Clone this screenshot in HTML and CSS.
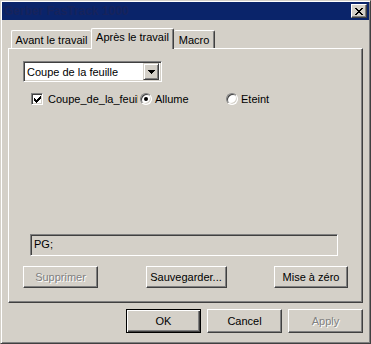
FILE: index.html
```html
<!DOCTYPE html>
<html lang="fr">
<head>
  <meta charset="UTF-8" />
  <title>Gerber FasTrack 1000</title>
  <link rel="stylesheet" href="styles.css">
</head>
<body>
  <div class="window">
    <div class="titlebar">
      <span class="title">Gerber FasTrack 1000</span>
      <button class="close" title="Fermer">
        <svg width="8" height="7" viewBox="0 0 8 7" shape-rendering="crispEdges">
          <path d="M0 0h2v1h-2zM6 0h2v1h-2zM1 1h2v1h-2zM5 1h2v1h-2zM2 2h4v1h-4zM3 3h2v1h-2zM2 4h4v1h-4zM1 5h2v1h-2zM5 5h2v1h-2zM0 6h2v1h-2zM6 6h2v1h-2z" fill="#000"/>
        </svg>
      </button>
    </div>
    <div class="content">
      <div class="tabs">
        <div class="tab tab-avant">Avant le travail</div>
        <div class="tab tab-apres active">Après le travail</div>
        <div class="tab tab-macro">Macro</div>
      </div>
      <div class="panel">
        <div class="combo">
          <span class="combo-text">Coupe de la feuille</span>
          <span class="combo-btn">
            <svg width="7" height="4" viewBox="0 0 7 4" shape-rendering="crispEdges">
              <path d="M0 0h7v1h-7zM1 1h5v1h-5zM2 2h3v1h-3zM3 3h1v1h-1z" fill="#000"/>
            </svg>
          </span>
        </div>
        <div class="options">
          <label class="check">
            <span class="box">
              <svg width="7" height="7" viewBox="0 0 7 7" shape-rendering="crispEdges">
                <path d="M6 0h1v3h-1zM5 1h1v3h-1zM4 2h1v3h-1zM3 3h1v3h-1zM2 4h1v3h-1zM1 3h1v3h-1zM0 2h1v3h-1z" fill="#000"/>
              </svg>
            </span>
            <span class="check-label">Coupe_de_la_feuille</span>
          </label>
          <label class="radio radio-allume"><span class="dot on"></span>Allume</label>
          <label class="radio"><span class="dot"></span>Eteint</label>
        </div>
        <div class="field">PG;</div>
        <div class="panel-buttons">
          <button class="btn btn-suppr" disabled>Supprimer</button>
          <button class="btn btn-save">Sauvegarder...</button>
          <button class="btn btn-reset">Mise à zéro</button>
        </div>
      </div>
      <div class="actions">
        <button class="btn btn-dialog default">OK</button>
        <button class="btn btn-dialog">Cancel</button>
        <button class="btn btn-dialog" disabled>Apply</button>
      </div>
    </div>
  </div>
</body>
</html>
```

FILE: styles.css
```css
* { box-sizing: border-box; }
html, body {
  margin: 0;
  background: #d4d0c8;
  font-family: "Liberation Sans", Arial, sans-serif;
  font-size: 11px;
  color: #000;
}
.window {
  width: 371px;
  height: 344px;
  padding: 1px;
  background: #d4d0c8;
  border: 1px solid;
  border-color: #d4d0c8 #404040 #404040 #d4d0c8;
  box-shadow: inset 1px 1px #fff, inset -1px -1px #808080;
}
.titlebar {
  height: 18px;
  background: #0a246a;
  display: flex;
  align-items: center;
  justify-content: space-between;
  padding: 0 2px 0 2px;
}
.title {
  font-weight: bold;
  font-size: 12px;
  color: #16235c;
  padding-left: 0;
}
.close {
  width: 16px;
  height: 14px;
  padding: 0;
  margin: 0;
  background: #d4d0c8;
  border: 1px solid;
  border-color: #fff #404040 #404040 #fff;
  box-shadow: inset -1px -1px #808080;
  display: flex;
  align-items: center;
  justify-content: center;
}
.close svg { display: block; margin-left: -1px; }

/* dialog body */
.content { padding: 0 6px; }
.tabs {
  display: flex;
  align-items: flex-end;
  height: 20px;
  margin-top: 8px;
  padding-left: 3px;
}
.tab {
  height: 18px;
  padding-top: 3px;
  text-align: center;
  white-space: nowrap;
  border-top: 1px solid #fff;
  border-left: 1px solid #fff;
  border-right: 1px solid #404040;
  border-radius: 2px 2px 0 0;
  box-shadow: inset -1px 0 #808080;
}
.tab-avant { width: 80px; border-right: none; box-shadow: none; }
.tab-apres { width: 83px; }
.tab-macro { width: 41px; border-left: none; }
.tab.active {
  position: relative;
  z-index: 1;
  height: 21px;
  margin-bottom: -1px;
  padding-top: 2px;
  background: #d4d0c8;
}
.panel {
  height: 255px;
  display: flex;
  flex-direction: column;
  padding: 12px 14px 14px 14px;
  border: 1px solid;
  border-color: #fff #404040 #404040 #fff;
  box-shadow: inset -1px -1px #808080;
}
.combo {
  width: 139px;
  height: 21px;
  display: flex;
  align-items: center;
  justify-content: space-between;
  background: #fff;
  border: 1px solid;
  border-color: #808080 #fff #fff #808080;
  box-shadow: inset 1px 1px #404040, inset -1px -1px #d4d0c8;
  padding: 2px;
}
.combo-text { padding-left: 1px; }
.combo-btn {
  width: 16px;
  height: 17px;
  display: flex;
  align-items: center;
  justify-content: center;
  background: #d4d0c8;
  border: 1px solid;
  border-color: #d4d0c8 #404040 #404040 #d4d0c8;
  box-shadow: inset 1px 1px #fff, inset -1px -1px #808080;
}
.combo-btn svg { display: block; }
.options {
  display: flex;
  align-items: center;
  height: 13px;
  margin-top: 10px;
  padding-left: 8px;
}
.check, .radio {
  display: flex;
  align-items: center;
  gap: 3px;
}
.check { width: 109px; gap: 5px; }
.box {
  width: 12px;
  height: 12px;
  flex: none;
  display: flex;
  align-items: center;
  justify-content: center;
  background: #fff;
  border: 1px solid;
  border-color: #808080 #fff #fff #808080;
  box-shadow: inset 1px 1px #404040, inset -1px -1px #d4d0c8;
}
.box svg { display: block; margin: 1px 0 0 1px; }
.check-label {
  width: 90px;
  overflow: hidden;
  white-space: nowrap;
}
.radio-allume { width: 86px; }
.dot {
  width: 12px;
  height: 12px;
  flex: none;
  border-radius: 50%;
  background: #fff;
  border: 1px solid;
  border-color: #808080 #fff #fff #808080;
  box-shadow: inset 1px 1px #404040, inset -1px -1px #d4d0c8;
  display: flex;
  align-items: center;
  justify-content: center;
}
.dot.on::after {
  content: "";
  width: 4px;
  height: 4px;
  border-radius: 50%;
  background: #000;
}
.field {
  width: 308px;
  height: 22px;
  margin-top: auto;
  margin-left: 7px;
  padding: 3px 3px;
  background: #d4d0c8;
  border: 1px solid;
  border-color: #808080 #fff #fff #808080;
  box-shadow: inset 1px 1px #404040, inset -1px -1px #d4d0c8;
}
.panel-buttons {
  display: flex;
  justify-content: space-between;
  margin-top: 10px;
}
.btn {
  height: 22px;
  padding: 0;
  font-family: inherit;
  font-size: 11px;
  color: #000;
  background: #d4d0c8;
  border: 1px solid;
  border-color: #fff #404040 #404040 #fff;
  box-shadow: inset -1px -1px #808080;
}
.btn:disabled {
  color: #808080;
  text-shadow: 1px 1px #fff;
}
.btn-suppr { width: 75px; }
.btn-save { width: 81px; }
.btn-reset { width: 74px; }
.actions {
  display: flex;
  justify-content: flex-end;
  gap: 6px;
  margin-top: 6px;
}
.btn-dialog { width: 75px; height: 24px; }
.btn.default {
  border: 1px solid #000;
  box-shadow: inset 1px 1px #fff, inset -1px -1px #404040, inset -2px -2px #808080;
}
```
